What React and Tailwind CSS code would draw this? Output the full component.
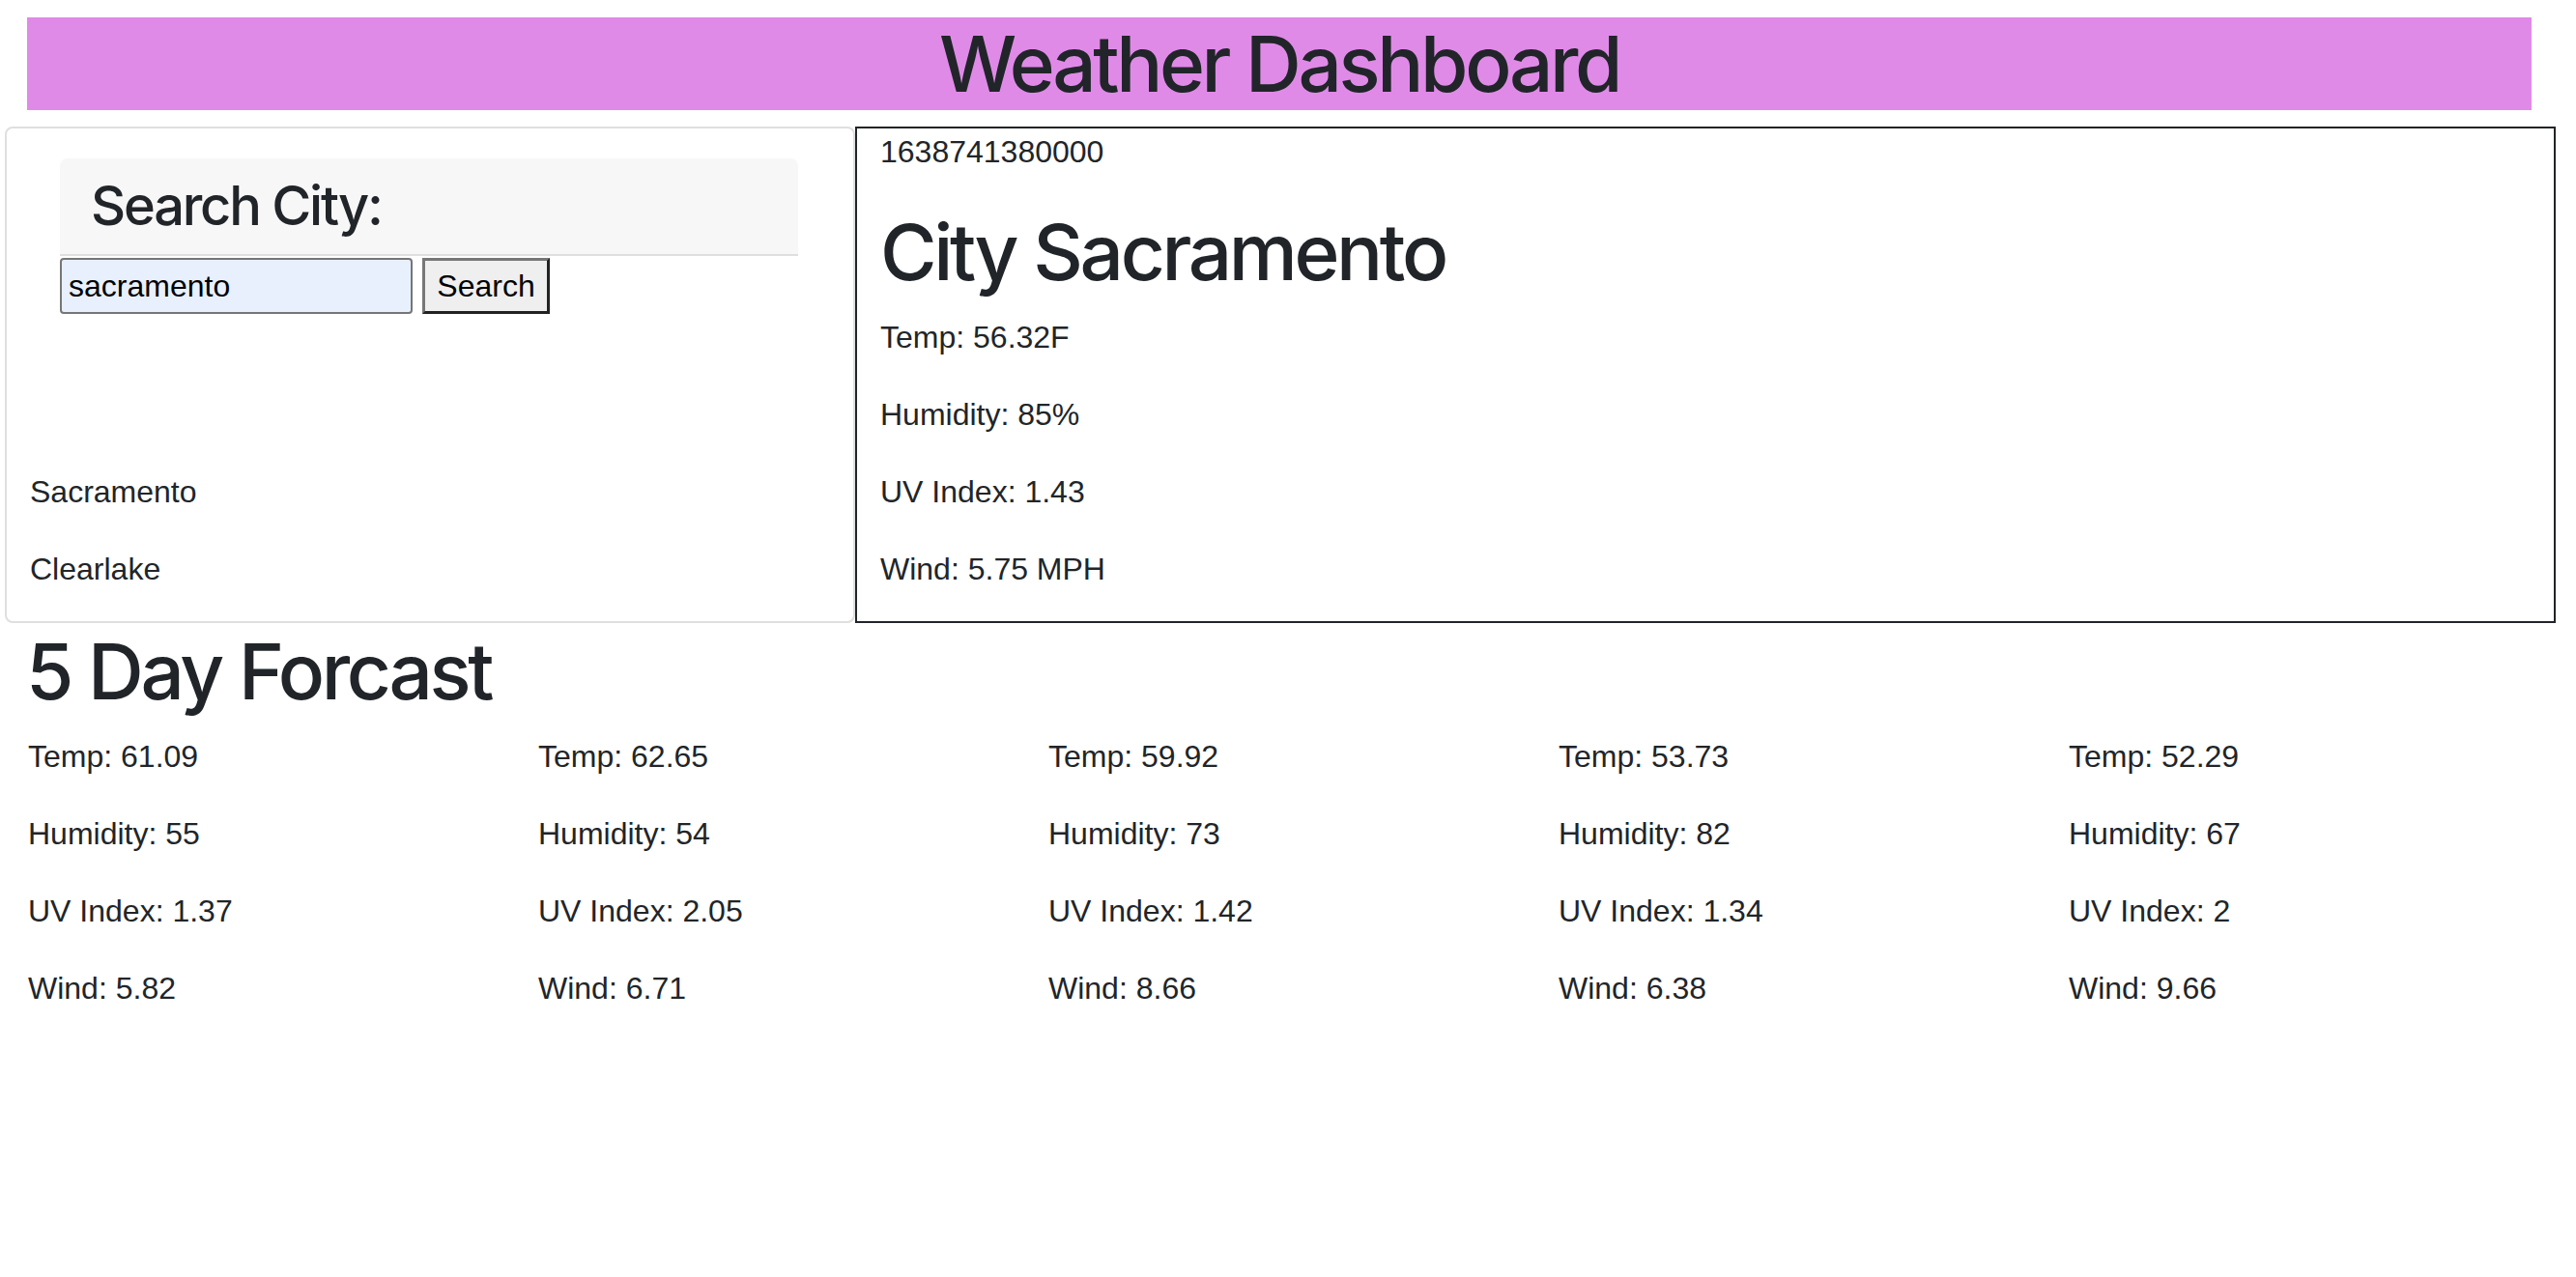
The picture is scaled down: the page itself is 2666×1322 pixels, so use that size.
export default function App() {
  const forecast = [
    { t: "61.09", h: "55", uv: "1.37", w: "5.82" },
    { t: "62.65", h: "54", uv: "2.05", w: "6.71" },
    { t: "59.92", h: "73", uv: "1.42", w: "8.66" },
    { t: "53.73", h: "82", uv: "1.34", w: "6.38" },
    { t: "52.29", h: "67", uv: "2", w: "9.66" },
  ];
  return (
    <div className="w-[2666px] min-h-[1322px] bg-white text-[#212529] font-['Liberation_Sans',Arial,sans-serif] text-[32px] leading-[48px]">
      <div className="pt-[18px] pl-[28px]">
        <div className="w-[2592px] h-[96px] bg-[#e08ae8] flex items-center justify-center">
          <h1 className="font-['Inter',sans-serif] font-medium text-[80px] leading-[96px] tracking-[-0.042em]">
            Weather Dashboard
          </h1>
        </div>
      </div>

      <div className="ml-[5px] w-[2640px] mt-[17px] flex">
        <div className="w-[880px] shrink-0 border-2 border-[#dfdfdf] rounded-[8px] pt-[31px] flex flex-col">
          <div className="ml-[55px] w-[764px] bg-[#f7f7f7] border-b-2 border-[#dfdfdf] rounded-t-[8px] px-[32px] py-[16px]">
            <h3 className="font-['Inter',sans-serif] font-medium text-[56px] leading-[67px] tracking-[-0.04em]">
              Search City:
            </h3>
          </div>
          <div className="ml-[55px] mt-[2px] flex items-start gap-[10px]">
            <input
              type="text"
              defaultValue="sacramento"
              className="w-[365px] h-[58px] border-2 border-[#767676] rounded-[4px] bg-[#e8f0fe] pl-[7px] text-[32px] text-black font-['Liberation_Sans',Arial,sans-serif] outline-none"
            />
            <button className="w-[132px] h-[58px] bg-[#efefef] border-[3px] border-solid border-t-[#777777] border-l-[#777777] border-r-[#222222] border-b-[#222222] text-[32px] leading-[48px] text-black font-['Liberation_Sans',Arial,sans-serif]">
              Search
            </button>
          </div>
          <div className="mt-auto px-[24px]">
            <p className="mb-[32px]">Sacramento</p>
            <p className="mb-[30px]">Clearlake</p>
          </div>
        </div>

        <div className="flex-1 border-2 border-[#212529] px-[24px]">
          <p className="mb-[32px]">1638741380000</p>
          <h1 className="font-['Inter',sans-serif] font-medium text-[80px] leading-[96px] tracking-[-0.042em] mb-[16px]">
            City Sacramento
          </h1>
          <p className="mb-[32px]">Temp: 56.32F</p>
          <p className="mb-[32px]">Humidity: 85%</p>
          <p className="mb-[32px]">UV Index: 1.43</p>
          <p className="mb-[30px]">Wind: 5.75 MPH</p>
        </div>
      </div>

      <div className="ml-[5px] w-[2640px]">
        <h1 className="pl-[22px] mt-[2px] font-['Inter',sans-serif] font-medium text-[80px] leading-[96px] tracking-[-0.042em] mb-[16px]">
          5 Day Forcast
        </h1>
        <div className="grid grid-cols-5">
          {forecast.map((d, i) => (
            <div key={i} className="px-[24px]">
              <p className="mb-[32px]">Temp: {d.t}</p>
              <p className="mb-[32px]">Humidity: {d.h}</p>
              <p className="mb-[32px]">UV Index: {d.uv}</p>
              <p className="mb-[32px]">Wind: {d.w}</p>
            </div>
          ))}
        </div>
      </div>
    </div>
  );
}
